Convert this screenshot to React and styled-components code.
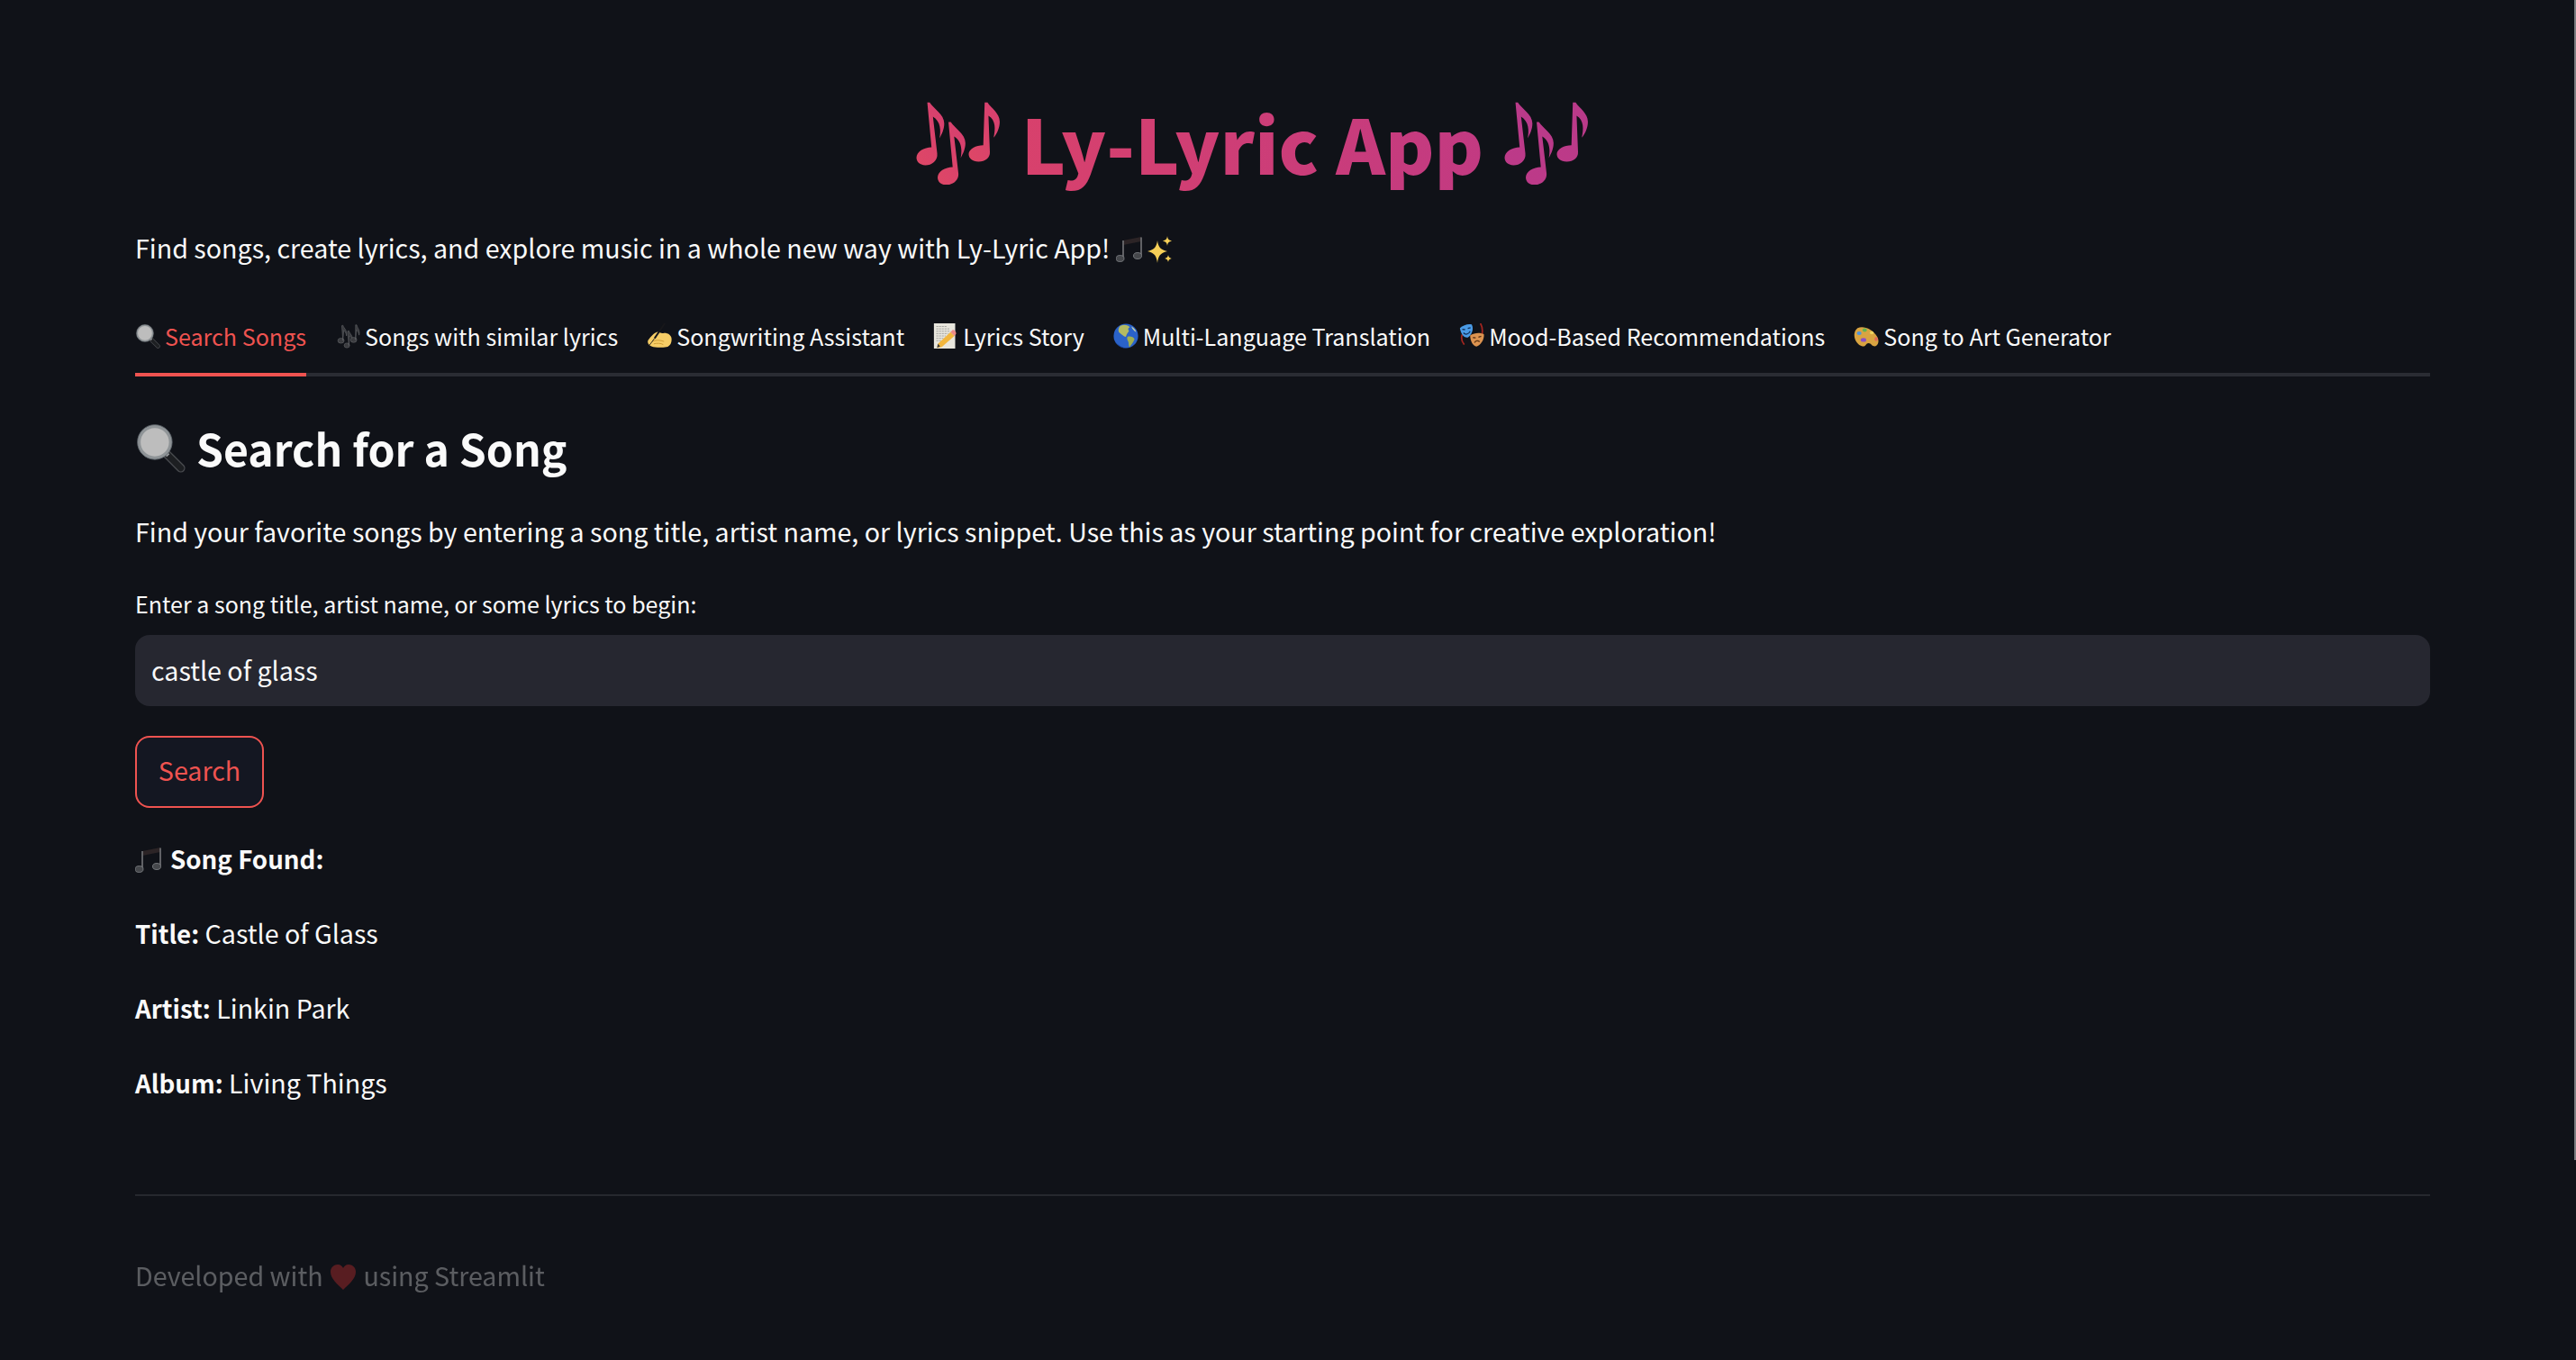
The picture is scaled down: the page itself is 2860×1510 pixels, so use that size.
import styled, { createGlobalStyle } from "styled-components";

const GlobalStyle = createGlobalStyle`
  html, body {
    margin: 0;
    height: 100%;
    background: #101218;
    overflow: hidden;
  }
  body {
    font-family: "Noto Sans CJK SC", "Noto Sans", sans-serif;
    color: #fafafa;
  }
  strong {
    font-size: 27.7px;
    font-weight: 700;
  }
`;

const Page = styled.main`
  height: 1510px;
  padding: 0 162px 0 150px;
  box-sizing: border-box;
  background: #101218;
`;

const Scrollbar = styled.div`
  position: fixed;
  top: 0;
  right: 0;
  width: 2px;
  height: 1288px;
  background: #7c7d80;
`;

const TitleRow = styled.h1`
  margin: 0;
  padding: 103px 67px 0 0;
  display: flex;
  justify-content: center;
  align-items: center;
  gap: 23px;
  height: 120px;
`;

const TitleText = styled.span`
  font-size: 83px;
  line-height: 120px;
  font-weight: 900;
  margin-bottom: 10px;
  background: linear-gradient(90deg, #d8416c, #c23a82);
  -webkit-background-clip: text;
  background-clip: text;
  color: transparent;
`;

const NotesSvg = styled.svg`
  flex: none;
  width: 94px;
  height: 92px;
  margin-bottom: 8px;
`;

const Intro = styled.p`
  margin: 26px 0 0;
  font-size: 28.64px;
  line-height: 51px;
  height: 51px;
`;

const TabBar = styled.nav`
  margin-top: 46px;
  display: flex;
  gap: 32px;
  border-bottom: 4px solid #2a2c33;
  height: 68px;
`;

const Tab = styled.div`
  display: flex;
  align-items: center;
  height: 72px;
  padding-bottom: 15px;
  box-sizing: border-box;
  font-size: 25.1px;
  white-space: nowrap;
  color: ${(p) => (p.$active ? "#ef5350" : "#fafafa")};
  border-bottom: 4px solid ${(p) => (p.$active ? "#ef5350" : "transparent")};
`;

const Heading = styled.h2`
  margin: 45px 0 0;
  font-size: 48.1px;
  line-height: 68px;
  font-weight: 700;
  display: flex;
  align-items: center;
`;

const Lead = styled.p`
  margin: 33px 0 0;
  font-size: 28.64px;
  line-height: 51px;
`;

const FieldLabel = styled.label`
  display: block;
  margin-top: 35px;
  font-size: 25.04px;
  line-height: 40px;
`;

const SearchInput = styled.div`
  margin-top: 15px;
  height: 79px;
  box-sizing: border-box;
  padding: 0 18px 3px;
  display: flex;
  align-items: center;
  border-radius: 16px;
  background: #262730;
  font-size: 28.64px;
`;

const SearchButton = styled.button`
  display: block;
  margin-top: 33px;
  width: 143px;
  height: 80px;
  padding: 0 0 6px;
  box-sizing: border-box;
  border: 2px solid #ef5350;
  border-radius: 16px;
  background: #141722;
  color: #ef5350;
  font-family: inherit;
  font-size: 28.64px;
`;

const Details = styled.section`
  margin-top: 30px;
  display: grid;
  row-gap: 32px;
`;

const Line = styled.p`
  margin: 0;
  font-size: 28.64px;
  line-height: 51px;
  height: 51px;
  white-space: pre;
`;

const Divider = styled.hr`
  margin: 99px 0 0;
  border: 0;
  height: 2px;
  background: #26282e;
`;

const Footer = styled.footer`
  margin-top: 62px;
  font-size: 28.64px;
  line-height: 51px;
  height: 51px;
  white-space: pre;
  opacity: 0.32;
`;

const Glyph = styled.svg`
  flex: none;
  vertical-align: -6px;
  width: ${(p) => p.$size}px;
  height: ${(p) => p.$size}px;
  margin-right: ${(p) => p.$gap || 0}px;
`;

const drawings = {
  search: (
    <>
      <path d="M41 41 L58 58" stroke="#4a4c50" strokeWidth="11" strokeLinecap="round" />
      <path d="M41 41 L58 58" stroke="#1d1f22" strokeWidth="8" strokeLinecap="round" />
      <path d="M37 37 L42 42" stroke="#9a9c9f" strokeWidth="5" />
      <circle cx="25" cy="25" r="20" fill="#bdbdbd" stroke="#8f9497" strokeWidth="4" />
      <circle cx="25" cy="25" r="22" fill="none" stroke="#5d636a" strokeWidth="1" />
    </>
  ),
  notes: (
    <g fill="#3a3b3f" stroke="#6a6b70" strokeWidth="1.2">
      <ellipse cx="15" cy="44" rx="8" ry="6.5" />
      <path d="M20 44 L17 6 L20 5 C23 14 32 18 29 32 C28 24 25 20 22 18 Z" />
      <ellipse cx="30" cy="56" rx="7" ry="6" />
      <path d="M35 56 L32 20 L35 19 C38 28 46 31 44 44 C43 37 40 34 37 32 Z" />
      <ellipse cx="47" cy="42" rx="8" ry="6.5" />
      <path d="M52 42 L52 4 L55 4 C57 13 64 17 61 30 C60 23 57 19 54 17 Z" />
    </g>
  ),
  note: (
    <g>
      <path d="M16 12 L56 4 L56 14 L16 22 Z" fill="#2c2426" />
      <path d="M16 12 L16 50 M56 5 L56 44" stroke="#6b6d70" strokeWidth="3.5" />
      <ellipse cx="9" cy="52" rx="9" ry="7" fill="#45474b" stroke="#8a8c90" strokeWidth="1.5" />
      <ellipse cx="48" cy="46" rx="9" ry="7" fill="#45474b" stroke="#8a8c90" strokeWidth="1.5" />
    </g>
  ),
  writing: (
    <g>
      <path
        d="M4 42 C10 34 18 24 26 22 C30 21 36 26 42 25 C50 23 62 28 63 38 C64 48 60 58 50 60 C38 62 22 62 12 58 C6 56 0 48 4 42 Z"
        fill="#f6cd66"
      />
      <path d="M14 46 C22 42 34 42 44 46 M18 52 C26 50 36 50 42 54" stroke="#c9962e" strokeWidth="2" fill="none" />
      <path d="M46 0 L20 38" stroke="#17171a" strokeWidth="4.5" />
      <path d="M20 38 L2 62" stroke="#17171a" strokeWidth="2" />
    </g>
  ),
  memo: (
    <g>
      <rect x="2" y="0" width="54" height="64" fill="#e8e6dd" />
      <path
        d="M8 8 H34 M8 14 H42 M8 20 H44 M8 26 H38 M8 32 H32 M8 38 H26 M8 44 H20"
        stroke="#8a8a86"
        strokeWidth="1.6"
        strokeDasharray="5 2"
      />
      <path d="M12 52 L44 22 L54 32 L22 60 L10 62 Z" fill="#f2b63d" />
      <path d="M44 22 L49 17 C52 14 60 22 58 27 L54 32 Z" fill="#ec8a86" />
      <path d="M10 62 L12 52 L18 58 Z" fill="#3b3b3b" />
    </g>
  ),
  globe: (
    <g>
      <circle cx="32" cy="32" r="31" fill="#2a62c9" />
      <path d="M6 46 C12 58 24 64 34 63 C20 60 10 54 6 46 Z" fill="#123a8e" />
      <path
        d="M18 6 C28 2 38 4 42 10 C36 12 38 16 40 20 C36 24 34 28 32 34 C26 34 22 28 16 24 C12 20 12 12 18 6 Z"
        fill="#b4bb62"
      />
      <path d="M36 34 C42 32 52 34 54 40 C52 48 46 52 42 60 C38 58 40 50 38 46 C36 42 34 38 36 34 Z" fill="#9fae52" />
      <path d="M46 8 C52 12 56 16 58 22 C54 20 48 14 46 8 Z" fill="#d9dfa0" />
    </g>
  ),
  masks: (
    <g>
      <path d="M8 28 C4 38 8 48 13 54 M54 0 C60 10 60 24 56 36" stroke="#a3251f" strokeWidth="4" fill="none" />
      <path d="M2 12 C10 4 24 0 32 3 C38 14 32 30 22 36 C12 38 4 26 2 12 Z" fill="#4a9be6" />
      <path d="M8 15 L15 16 M22 13 L29 11" stroke="#12305a" strokeWidth="3" />
      <path d="M11 24 C16 30 24 28 28 20" stroke="#12305a" strokeWidth="3" fill="none" />
      <path d="M28 30 C38 24 54 22 63 28 C64 42 54 56 44 59 C34 56 28 44 28 30 Z" fill="#dc9350" />
      <path d="M35 36 L42 37 M49 35 L56 33" stroke="#5a3213" strokeWidth="3" />
      <path d="M39 49 C42 43 48 43 52 47" stroke="#5a3213" strokeWidth="3" fill="none" />
    </g>
  ),
  palette: (
    <g>
      <path
        d="M10 12 C24 5 48 14 60 34 C66 44 62 58 54 58 C46 58 44 50 38 50 C30 50 32 60 22 58 C10 56 0 40 2 26 C3 20 6 15 10 12 Z"
        fill="#d9a441"
      />
      <ellipse cx="14" cy="25" rx="6" ry="4.5" fill="#4f94dc" />
      <ellipse cx="28" cy="17" rx="5.5" ry="4.5" fill="#62b552" />
      <ellipse cx="46" cy="24" rx="5" ry="4" fill="#ecd35f" />
      <ellipse cx="57" cy="40" rx="4" ry="5" fill="#e2675a" />
      <ellipse cx="25" cy="42" rx="7" ry="5" fill="#8a4fc4" />
    </g>
  ),
  sparkles: (
    <g fill="#f6cf57">
      <path d="M28 12 C30 26 34 32 50 36 C34 40 30 46 28 62 C26 46 22 40 6 36 C22 32 26 26 28 12 Z" />
      <path d="M50 2 C51 9 53 11 60 13 C53 15 51 17 50 24 C49 17 47 15 40 13 C47 11 49 9 50 2 Z" />
      <path d="M52 44 C53 49 54 50 60 52 C54 54 53 55 52 60 C51 55 50 54 44 52 C50 50 51 49 52 44 Z" />
    </g>
  ),
  heart: (
    <path
      d="M32 60 C20 48 4 36 4 20 C4 10 12 4 20 4 C26 4 30 8 32 12 C34 8 38 4 44 4 C52 4 60 10 60 20 C60 36 44 48 32 60 Z"
      fill="#f03434"
    />
  ),
};

const Emoji = ({ name, size, gap }) => (
  <Glyph viewBox="0 0 64 64" $size={size} $gap={gap} aria-hidden="true">
    {drawings[name]}
  </Glyph>
);

// the title's 🎶 takes the same gradient as the letters
const TitleNotes = ({ from, to, id }) => (
  <NotesSvg viewBox="75 98 180 277" preserveAspectRatio="none" aria-hidden="true">
    <defs>
      <linearGradient id={id} x1="0" x2="1" y1="1" y2="0">
        <stop offset="0" stopColor={from} />
        <stop offset="1" stopColor={to} />
      </linearGradient>
    </defs>
    <g fill={`url(#${id})`}>
      <path d="M99 100 L104 100 C112 120 135 140 135 170 C135 190 130 205 125 220 C128 195 128 165 111 148 L120 270 C122 295 108 310 95 310 C82 310 76 298 76 285 C76 265 92 250 108 250 Z" />
      <path
        transform="translate(45 66)"
        d="M99 100 L104 100 C112 120 135 140 135 170 C135 190 130 205 125 220 C128 195 128 165 111 148 L120 270 C122 295 108 310 95 310 C82 310 76 298 76 285 C76 265 92 250 108 250 Z"
      />
      <path d="M221 100 L227 100 C235 120 253 135 253 165 C253 185 247 205 240 218 C244 190 245 160 229 145 L232 265 C233 285 222 298 208 298 C195 298 187 288 187 273 C187 255 203 243 218 243 Z" />
    </g>
  </NotesSvg>
);

const tabs = [
  ["search", "Search Songs"],
  ["notes", "Songs with similar lyrics"],
  ["writing", "Songwriting Assistant"],
  ["memo", "Lyrics Story"],
  ["globe", "Multi-Language Translation"],
  ["masks", "Mood-Based Recommendations"],
  ["palette", "Song to Art Generator"],
];

const song = [
  ["Title:", "Castle of Glass"],
  ["Artist:", "Linkin Park"],
  ["Album:", "Living Things"],
];

const App = () => {
  return (
    <Page>
      <GlobalStyle />
      <Scrollbar />
      <TitleRow>
        <TitleNotes id="notesLeft" from="#de4766" to="#d63f70" />
        <TitleText>Ly-Lyric App</TitleText>
        <TitleNotes id="notesRight" from="#bd3a88" to="#b93a8a" />
      </TitleRow>
      <Intro>
        Find songs, create lyrics, and explore music in a whole new way with Ly-Lyric App!{" "}
        <Emoji name="note" size={32} />
        <Emoji name="sparkles" size={32} />
      </Intro>
      <TabBar>
        {tabs.map(([icon, label], i) => (
          <Tab key={label} $active={i === 0}>
            <Emoji name={icon} size={28} gap={5} />
            {label}
          </Tab>
        ))}
      </TabBar>
      <Heading>
        <Emoji name="search" size={56} gap={12} />
        Search for a Song
      </Heading>
      <Lead>
        Find your favorite songs by entering a song title, artist name, or lyrics snippet. Use this as your starting
        point for creative exploration!
      </Lead>
      <FieldLabel>Enter a song title, artist name, or some lyrics to begin:</FieldLabel>
      <SearchInput>castle of glass</SearchInput>
      <SearchButton>Search</SearchButton>
      <Details>
        <Line>
          <Emoji name="note" size={32} gap={7} />
          <strong>Song Found:</strong>
        </Line>
        {song.map(([key, value]) => (
          <Line key={key}>
            <strong>{key}</strong> {value}
          </Line>
        ))}
      </Details>
      <Divider />
      <Footer>
        Developed with <Emoji name="heart" size={32} /> using Streamlit
      </Footer>
    </Page>
  );
};

export default App;
